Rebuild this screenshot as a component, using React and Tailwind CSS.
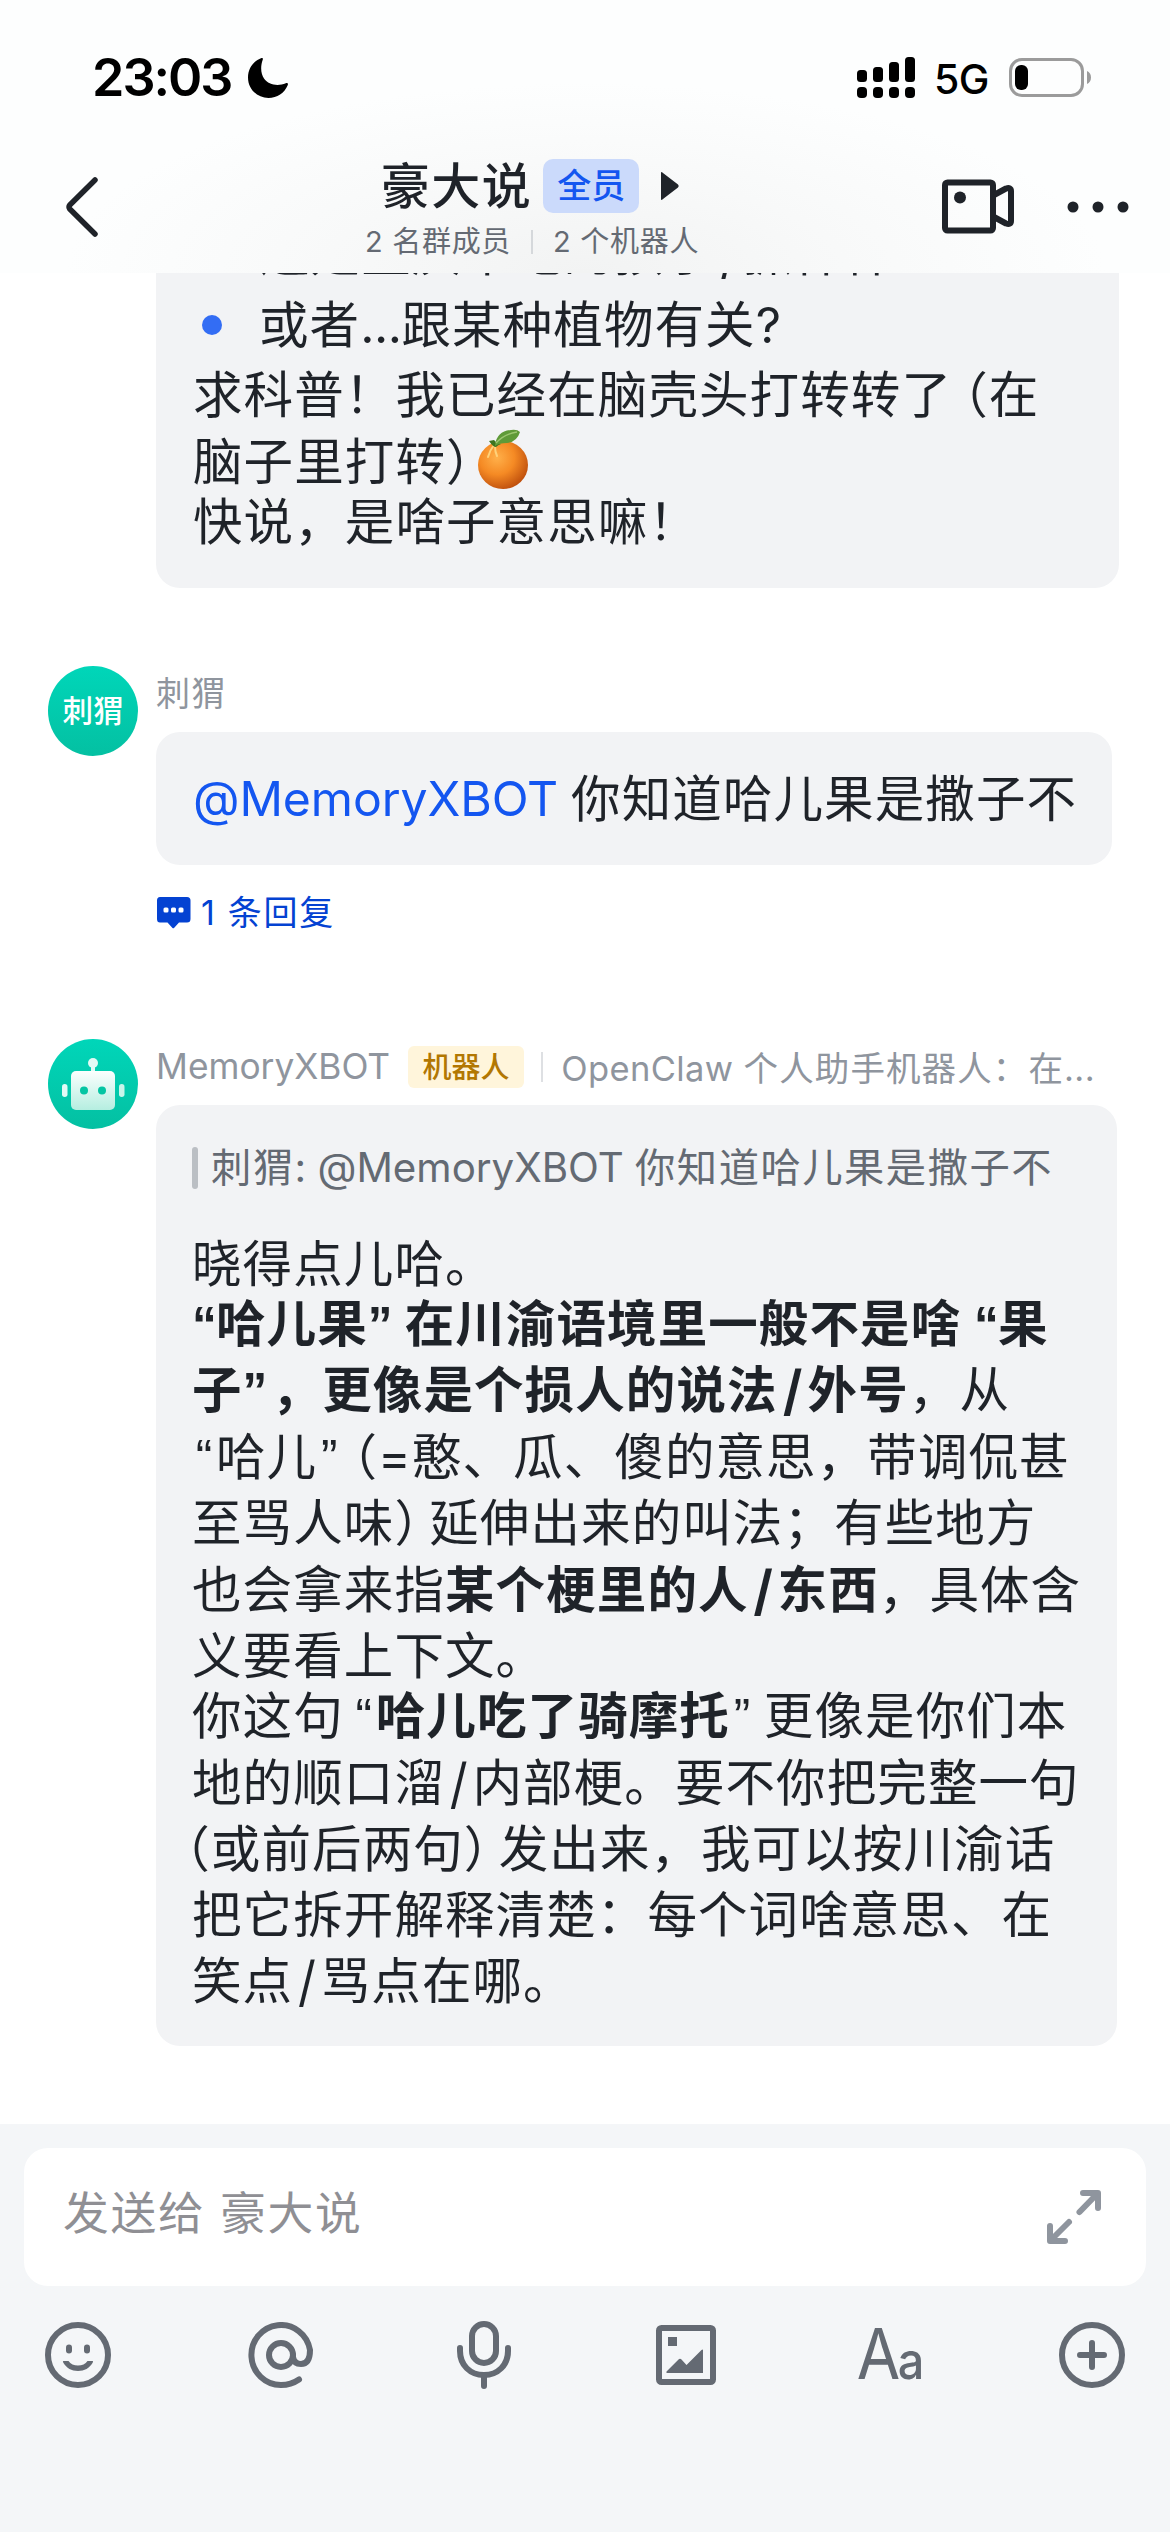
/**
 * Group chat screen: status bar, header, message list and composer.
 *
 * @file Static mobile chat view.
 * @imports react
 * @exports App component
 */
const FONT = "font-['Inter','Noto_Sans_CJK_SC',sans-serif]";
const BODY = 'text-[49.5px] leading-[66px] tracking-[1.1px] text-[#1f2329]';

function StatusBar() {
  return (
    <div className="flex h-[132px] items-center pt-[24px] pr-[77px] pl-[92px] text-black">
      <span className="w-[155px] text-[52px] leading-none font-semibold tracking-[-2px]">23:03</span>
      <svg width="42" height="42" viewBox="0 0 42 42" aria-hidden>
        <path d="M14.5 1C15.6 .6 16.2 1.4 15.8 2.4C13.2 9.5 13.8 17 17 21.5C21.5 28 31 29.5 38.8 26.2C40.3 25.6 41.3 26.4 40.8 28C37.6 36 30 41 21.5 41C10 41 1 32 1 20.5C1 11.5 6.5 4 14.5 1Z" />
      </svg>
      <svg className="ml-auto" width="58" height="42" viewBox="0 0 58 42" aria-hidden>
        <rect x="0" y="13" width="10" height="12" rx="3.5" />
        <rect x="16" y="10" width="10" height="15" rx="3.5" />
        <rect x="32" y="5" width="10" height="20" rx="3.5" />
        <rect x="48" y="0" width="10" height="25" rx="3.5" />
        <rect x="0" y="30" width="10" height="11" rx="4" />
        <rect x="16" y="30" width="10" height="11" rx="4" />
        <rect x="32" y="30" width="10" height="11" rx="4" />
        <rect x="48" y="30" width="10" height="11" rx="4" />
      </svg>
      <span className="ml-[19px] w-[56px] pt-[2px] text-[41px] leading-none font-medium tracking-[-0.5px]">5G</span>
      <svg className="ml-[19px]" width="84" height="40" viewBox="0 0 84 40" aria-hidden>
        <rect x="1.5" y="1.5" width="72" height="36" rx="11.5" fill="none" stroke="#9b9b9b" strokeWidth="3" />
        <rect x="6" y="7" width="13" height="25" rx="6" />
        <path d="M78 13C80.5 14 82 16.5 82 19.5C82 22.5 80.5 25 78 26Z" fill="#9b9b9b" />
      </svg>
    </div>
  );
}

function Header() {
  return (
    <header className="relative z-10 h-[273px] shrink-0 bg-[radial-gradient(ellipse_520px_190px_at_50%_100%,#f2f3f3_0%,#f8f9f9_50%,#fdfefe_100%)]">
      <StatusBar />
      <div className="flex h-[141px] items-start pr-[39px] pl-[64px]">
        <button type="button" aria-label="返回" className="mt-[43px] w-[301px]">
          <svg width="38" height="64" viewBox="0 0 38 64" fill="none" stroke="#1f2329" strokeWidth="5.5" strokeLinecap="round" strokeLinejoin="round">
            <path d="M31 5L5.8 30Q4.3 32 5.8 34L31 59" />
          </svg>
        </button>
        <div className="flex flex-col items-center">
          <div className="mt-[27px] flex h-[54px] items-center">
            <h1 className="pt-[2px] text-[49px] leading-[54px] font-medium tracking-[1.5px] text-[#1f2329]">豪大说</h1>
            <span className="ml-[11px] flex h-[54px] w-[96px] items-center justify-center rounded-[10px] bg-[#cbdafb] text-[34px] leading-none font-medium text-[#1456f0]">
              全员
            </span>
            <svg className="mr-[2px] ml-[22px]" width="20" height="30" viewBox="0 0 20 30" fill="#1f2329" aria-hidden>
              <path d="M0 2Q0 0 2 2L17 13.5Q18.5 15 17 16.5L2 28Q0 30 0 28Z" />
            </svg>
          </div>
          <div className="mt-[10px] flex h-[38px] items-center text-[29px] leading-[38px] tracking-[0.7px] text-[#646a73]">
            <span>2 名群成员</span>
            <span className="mx-[20px] h-[24px] w-[2px] bg-[#d5d8db]" />
            <span>2 个机器人</span>
          </div>
        </div>
        <div className="mt-[47px] ml-auto flex items-center gap-[52px] text-[#1f2329]">
          <svg width="73" height="55" viewBox="0 0 73 55" fill="none" stroke="currentColor" strokeWidth="6" strokeLinejoin="round" aria-label="视频会议">
            <rect x="3" y="3.5" width="48" height="48" rx="2.5" />
            <path d="M52 16L64 9.5Q69 8 69 12V42Q69 46 64 44.5L52 38" />
            <circle cx="18" cy="18.5" r="6" fill="currentColor" stroke="none" />
          </svg>
          <svg width="64" height="12" viewBox="0 0 64 12" fill="currentColor" aria-label="更多">
            <circle cx="6" cy="6" r="5.5" />
            <circle cx="31" cy="6" r="5.5" />
            <circle cx="56" cy="6" r="5.5" />
          </svg>
        </div>
      </div>
    </header>
  );
}

function Tangerine() {
  return (
    <svg className="-mt-[14px] ml-[5px] inline-block" width="52" height="62" viewBox="0 0 52 62" role="img" aria-label="橘子">
      <defs>
        <radialGradient id="peel" cx="0.38" cy="0.35" r="0.7">
          <stop offset="0" stopColor="#ffb04a" />
          <stop offset="0.5" stopColor="#f58a24" />
          <stop offset="1" stopColor="#bd4d0c" />
        </radialGradient>
      </defs>
      <ellipse cx="26" cy="37" rx="25" ry="24" fill="url(#peel)" />
      <path d="M17 17Q13 22 11 29M18 18Q18 24 20 28" stroke="#ffd27a" strokeWidth="2" fill="none" strokeLinecap="round" />
      <path d="M12 13Q16 19 19 19Q21 17 24 16L20 15L17 12Z" fill="#3d7420" />
      <path d="M18 17Q20 3 34 2Q40 1 43 4Q40 14 30 15Q22 15 18 18Z" fill="#5f9a38" />
      <path d="M19 15Q27 6 40 4" stroke="#9cc670" strokeWidth="1.5" fill="none" />
    </svg>
  );
}

/** One row of body text; `first` pulls up the first row of a paragraph. */
function Line({ first = false, className = '', children }) {
  return (
    <div className={['flex h-[66.2px] items-center whitespace-pre', first ? '-mt-[5.5px]' : '', className].join(' ')}>
      <span>{children}</span>
    </div>
  );
}

/** Half-width bracket. */
function Paren({ className = '', children }) {
  return <span className={["[font-feature-settings:'halt']", className].join(' ')}>{children}</span>;
}

function Quote({ className = 'w-[24px]', children }) {
  return (
    <span className={["inline-block text-center font-['Liberation_Sans'] tracking-normal", className].join(' ')}>
      {children}
    </span>
  );
}

function Slash({ className = 'w-[27.5px]' }) {
  return <span className={['inline-block scale-y-110 text-center tracking-normal', className].join(' ')}>/</span>;
}

function Avatar({ children }) {
  return (
    <div className="flex size-[90px] shrink-0 items-center justify-center rounded-full bg-linear-to-b from-[#00d6b9] to-[#04c0a2] text-[30.5px] font-medium text-white">
      {children}
    </div>
  );
}

function Robot() {
  return (
    <svg width="90" height="90" viewBox="0 0 90 90" aria-hidden>
      <defs>
        <linearGradient id="robotFace" x1="0" y1="0" x2="0" y2="1">
          <stop offset="0" stopColor="#fbfffe" />
          <stop offset="1" stopColor="#b5eee0" />
        </linearGradient>
      </defs>
      <circle cx="45" cy="24" r="5" fill="#e2faf5" />
      <rect x="43" y="25" width="4" height="10" fill="#e2faf5" />
      <rect x="23" y="32" width="44" height="39" rx="5" fill="url(#robotFace)" />
      <rect x="14" y="45" width="5.5" height="13" rx="2.7" fill="#e2faf5" />
      <rect x="71" y="45" width="5.5" height="13" rx="2.7" fill="#c9f5ea" />
      <circle cx="36" cy="51.5" r="4" fill="#04c5a3" />
      <circle cx="54" cy="51.5" r="4" fill="#04c5a3" />
    </svg>
  );
}

function FirstMessage() {
  return (
    <div className={`-mt-[53px] ml-[156px] h-[368px] w-[963px] shrink-0 rounded-b-[24px] bg-[#f2f3f5] pl-[37px] ${BODY}`}>
      <Line className="pl-[67px]">还是重庆本地的孩子<Slash />抓样样</Line>
      <div className="mt-[6px] flex items-center">
        <span className="mr-[37px] ml-[9px] size-[20px] rounded-full bg-[#336df4]" />
        <Line>或者<span className="tracking-[-0.5px]">...</span>跟某种植物有关?</Line>
      </div>
      <Line className="mt-[4px]">求科普！我已经在脑壳头打转转了<Paren className="ml-[11px]">（</Paren>在</Line>
      <Line>脑子里打转<Paren>）</Paren><Tangerine /></Line>
      <Line first>快说，是啥子意思嘛！</Line>
    </div>
  );
}

function UserMessage() {
  return (
    <div className="mt-[78px] flex pl-[48px]">
      <Avatar>刺猬</Avatar>
      <div className="ml-[18px]">
        <div className="mt-[6px] text-[34px] leading-[44px] tracking-[1.2px] text-[#8f959e]">刺猬</div>
        <div className={`mt-[16px] flex h-[133px] w-[956px] items-center rounded-[24px] bg-[#f2f3f5] pl-[37px] whitespace-pre ${BODY}`}>
          <span className="text-[48.2px] tracking-[-0.1px] text-[#1456f0]">@MemoryXBOT</span>
          <span className="-ml-[2px]"> 你知道哈儿果是撒子不</span>
        </div>
        <div className="mt-[26px] flex h-[44px] items-center text-[34px] leading-[44px] tracking-[1.7px] text-[#0442d2]">
          <svg className="mr-[10px]" width="35" height="32" viewBox="0 0 35 32" aria-hidden>
            <path d="M4 0H31Q34.5 0 34.5 3.5V22Q34.5 25.5 31 25.5H23L18 31Q17.3 31.7 16.5 31L11.5 25.5H4Q1 25.5 1 22V3.5Q1 0 4 0Z" fill="#0442d2" />
            <rect x="7.5" y="10.5" width="5" height="5" rx="1.5" fill="#fff" />
            <rect x="15" y="10.5" width="5" height="5" rx="1.5" fill="#fff" />
            <rect x="22.5" y="10.5" width="5" height="5" rx="1.5" fill="#fff" />
          </svg>
          1 条回复
        </div>
      </div>
    </div>
  );
}

function BotMessage() {
  return (
    <div className="mt-[104px] flex pl-[48px]">
      <Avatar>
        <Robot />
      </Avatar>
      <div className="ml-[18px]">
        <div className="mt-[6px] flex h-[44px] items-center text-[#8f959e]">
          <span className="text-[35.3px] leading-[44px]">MemoryXBOT</span>
          <span className="ml-[18px] flex h-[42px] w-[116px] items-center justify-center rounded-[6px] bg-[#fff5db] text-[29px] leading-none font-medium text-[#b27702]">
            机器人
          </span>
          <span className="ml-[17px] h-[30px] w-[2px] bg-[#dee0e3]" />
          <span className="mt-[4px] ml-[18px] text-[34.5px] leading-[44px] tracking-[0.4px] whitespace-pre">
            OpenClaw <span className="tracking-[1.1px]">个人助手机器人：在</span><span>...</span>
          </span>
        </div>
        <div className="mt-[16px] h-[941px] w-[961px] rounded-[24px] bg-[#f2f3f5] pt-[37px] pl-[36px]">
          <div className="flex h-[52px] items-center text-[40.3px] leading-[52px] whitespace-pre text-[#646a73]">
            <span className="mr-[13px] h-[42px] w-[6px] rounded-full bg-[#bbbfc4]" />
            <span>
              <span className="tracking-[1.5px]">刺猬</span>: @MemoryXBOT <span className="tracking-[1.5px]">你知道哈儿果是撒子不</span>
            </span>
          </div>
          <div className={`mt-[37px] ${BODY}`}>
            <Line>晓得点儿哈。</Line>
            <Line first className="font-bold"><Quote>“</Quote>哈儿果<Quote>”</Quote> 在川渝语境里一般不是啥 <Quote>“</Quote>果</Line>
            <Line><b>子<Quote className="mr-[5px] w-[24px]">”</Quote>，更像是个损人的说法<Slash className="w-[30px]" />外号</b>，从</Line>
            <Line><Quote>“</Quote>哈儿<Quote>”</Quote><Paren className="ml-[11px]">（</Paren>=憨、瓜、傻的意思，带调侃甚</Line>
            <Line>至骂人味<Paren className="mr-[9px]">）</Paren>延伸出来的叫法；有些地方</Line>
            <Line>也会拿来指<b>某个梗里的人<Slash className="w-[29px]" />东西</b>，具体含</Line>
            <Line>义要看上下文。</Line>
            <Line first>你这句<span className="tracking-[-6px]"> </span><Quote>“</Quote><b>哈儿吃了骑摩托</b><Quote>”</Quote><span className="tracking-[-4px]"> </span>更像是你们本</Line>
            <Line>地的顺口溜<Slash />内部梗。要不你把完整一句</Line>
            <Line><Paren className="-ml-[7px]">（</Paren>或前后两句<Paren className="mr-[9px]">）</Paren>发出来，我可以按川渝话</Line>
            <Line>把它拆开解释清楚：每个词啥意思、在</Line>
            <Line>笑点<Slash />骂点在哪。</Line>
          </div>
        </div>
      </div>
    </div>
  );
}

function Composer() {
  return (
    <footer className="mt-auto h-[408px] shrink-0 bg-[#f4f6f8] px-[24px] pt-[24px]">
      <div className="flex h-[138px] items-center justify-between rounded-[24px] bg-white pr-[43px] pl-[39px]">
        <span className="-mt-[6px] text-[45.8px] leading-[60px] tracking-[1.7px] text-[#8f8f94]">发送给 豪大说</span>
        <svg width="58" height="58" viewBox="0 0 58 58" fill="none" stroke="#8f959e" strokeWidth="6" strokeLinecap="round" strokeLinejoin="round" aria-label="展开">
          <path d="M38 5H53V20M52 6L34.5 24M20 53H5V38M6 52L24 34" />
        </svg>
      </div>
      <div className="mt-[35px] flex h-[68px] items-center justify-between px-[21px]">
        <svg width="66" height="66" viewBox="0 0 66 66" fill="none" stroke="#646a73" strokeWidth="6">
          <circle cx="33" cy="33" r="30" />
          <rect x="21" y="22.5" width="6" height="9" rx="3" fill="#646a73" stroke="none" />
          <rect x="39" y="22.5" width="6" height="9" rx="3" fill="#646a73" stroke="none" />
          <path d="M18.5 39H23.5C25.5 42 29 43.5 33 43.5S40.5 42 42.5 39H47.5C48.5 39 48 40 47.5 41C44.5 46 39.5 49 33 49S21.5 46 18.5 41C18 40 17.5 39 18.5 39Z" fill="#646a73" stroke="none" />
        </svg>
        <svg width="66" height="66" viewBox="0 0 66 66" fill="none" stroke="#646a73" strokeWidth="6" strokeLinecap="round">
          <circle cx="33" cy="33" r="12" />
          <path d="M45 33V35Q46 42 53 42Q62 42 62 28A29.5 30 0 1 0 33 63Q43 63 51 57.5" />
        </svg>
        <svg width="66" height="68" viewBox="0 0 66 68" fill="none" stroke="#646a73" strokeWidth="6" strokeLinecap="round">
          <rect x="21" y="3" width="24" height="39" rx="12" />
          <path d="M9 27V30C9 44 19 54 33 54S57 44 57 30V27M33 54V65" />
        </svg>
        <svg width="66" height="66" viewBox="0 0 66 66" fill="none" stroke="#646a73" strokeWidth="6">
          <rect x="6" y="6" width="54" height="54" rx="2.5" />
          <rect x="15" y="15" width="9" height="9" fill="#646a73" stroke="none" />
          <path d="M13.5 51V49.5L25.5 37.5Q27 36 28.5 37.5L33.5 43L48.5 28Q50 27 50 28.5V51Z" fill="#646a73" stroke="none" />
        </svg>
        <span className="flex size-[66px] items-center justify-center text-[#646a73]">
          <span className="-mt-[3px] scale-x-90 text-[70px] leading-none font-normal tracking-[-2.5px]">
            A<span className="text-[52px] font-medium">a</span>
          </span>
        </span>
        <svg width="66" height="66" viewBox="0 0 66 66" fill="none" stroke="#646a73" strokeWidth="6" strokeLinecap="round">
          <circle cx="33" cy="33" r="30" />
          <path d="M33 21V45M21 33H45" />
        </svg>
      </div>
    </footer>
  );
}

export default function App() {
  return (
    <div lang="zh-CN" className={`flex h-[2532px] w-[1170px] flex-col overflow-hidden bg-white ${FONT}`}>
      <Header />
      <main className="flex flex-col">
        <FirstMessage />
        <UserMessage />
        <BotMessage />
      </main>
      <Composer />
    </div>
  );
}
